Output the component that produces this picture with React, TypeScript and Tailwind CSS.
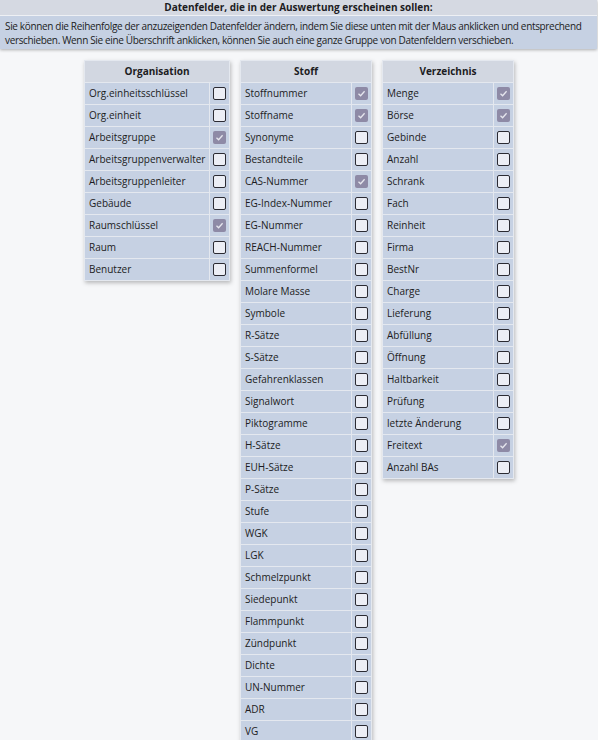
const organisation: [string, boolean][] = [
  ["Org.einheitsschlüssel", false],
  ["Org.einheit", false],
  ["Arbeitsgruppe", true],
  ["Arbeitsgruppenverwalter", false],
  ["Arbeitsgruppenleiter", false],
  ["Gebäude", false],
  ["Raumschlüssel", true],
  ["Raum", false],
  ["Benutzer", false],
];

const stoff: [string, boolean][] = [
  ["Stoffnummer", true],
  ["Stoffname", true],
  ["Synonyme", false],
  ["Bestandteile", false],
  ["CAS-Nummer", true],
  ["EG-Index-Nummer", false],
  ["EG-Nummer", false],
  ["REACH-Nummer", false],
  ["Summenformel", false],
  ["Molare Masse", false],
  ["Symbole", false],
  ["R-Sätze", false],
  ["S-Sätze", false],
  ["Gefahrenklassen", false],
  ["Signalwort", false],
  ["Piktogramme", false],
  ["H-Sätze", false],
  ["EUH-Sätze", false],
  ["P-Sätze", false],
  ["Stufe", false],
  ["WGK", false],
  ["LGK", false],
  ["Schmelzpunkt", false],
  ["Siedepunkt", false],
  ["Flammpunkt", false],
  ["Zündpunkt", false],
  ["Dichte", false],
  ["UN-Nummer", false],
  ["ADR", false],
  ["VG", false],
];

const verzeichnis: [string, boolean][] = [
  ["Menge", true],
  ["Börse", true],
  ["Gebinde", false],
  ["Anzahl", false],
  ["Schrank", false],
  ["Fach", false],
  ["Reinheit", false],
  ["Firma", false],
  ["BestNr", false],
  ["Charge", false],
  ["Lieferung", false],
  ["Abfüllung", false],
  ["Öffnung", false],
  ["Haltbarkeit", false],
  ["Prüfung", false],
  ["letzte Änderung", false],
  ["Freitext", true],
  ["Anzahl BAs", false],
];

function Box({ checked }: { checked: boolean }) {
  if (checked) {
    return (
      <span className="flex h-[13px] w-[13px] items-center justify-center rounded-[2px] bg-[#8e8aa6]">
        <svg width="9" height="9" viewBox="0 0 9 9" fill="none">
          <path d="M1.5 4.8 L3.6 6.8 L7.6 2.2" stroke="#e6e6ee" strokeWidth="1.3" />
        </svg>
      </span>
    );
  }
  return <span className="h-[13px] w-[13px] rounded-[2px] border border-[#2b2b33] bg-[#eceef5]" />;
}

function Group({ title, items, width }: { title: string; items: [string, boolean][]; width: string }) {
  return (
    <div className={`${width} flex flex-col gap-px self-start bg-[#e4e8ef] p-px shadow-[1px_2px_4px_rgba(0,0,0,0.25)]`}>
      <div className="flex h-[21px] items-center justify-center bg-[#d2d7e1] font-bold text-[#1c1c22]">{title}</div>
      {items.map(([label, checked]) => (
        <div key={label} className="flex h-[21px] gap-px">
          <div className="flex flex-1 items-center bg-[#c6d1e3] pl-[4px] text-[#1c1c22]">{label}</div>
          <div className="flex w-[19px] items-center justify-center bg-[#c6d1e3]">
            <Box checked={checked} />
          </div>
        </div>
      ))}
    </div>
  );
}

export default function App() {
  return (
    <div className="min-h-screen bg-[#f6f7f9] text-[10px] font-['Open_Sans',sans-serif]">
      <div className="flex w-[597px] flex-col gap-px bg-[#eef0f4] shadow-[0_1px_3px_rgba(0,0,0,0.3)]">
        <div className="flex h-[15px] items-center justify-center bg-[#d5d9e2] font-bold text-[#1c1c22]">
          Datenfelder, die in der Auswertung erscheinen sollen:
        </div>
        <div className="whitespace-nowrap bg-[#c6d1e3] px-[5px] pb-[2px] pt-[3px] leading-[14px] tracking-[-0.34px] text-[#1c1c22]">
          Sie können die Reihenfolge der anzuzeigenden Datenfelder ändern, indem Sie diese unten mit der Maus anklicken und entsprechend
          <br />
          verschieben. Wenn Sie eine Überschrift anklicken, können Sie auch eine ganze Gruppe von Datenfeldern verschieben.
        </div>
      </div>
      <div className="mt-[11px] flex justify-center gap-[10px]">
        <Group title="Organisation" items={organisation} width="w-[146px]" />
        <Group title="Stoff" items={stoff} width="w-[132px]" />
        <Group title="Verzeichnis" items={verzeichnis} width="w-[132px]" />
      </div>
    </div>
  );
}
